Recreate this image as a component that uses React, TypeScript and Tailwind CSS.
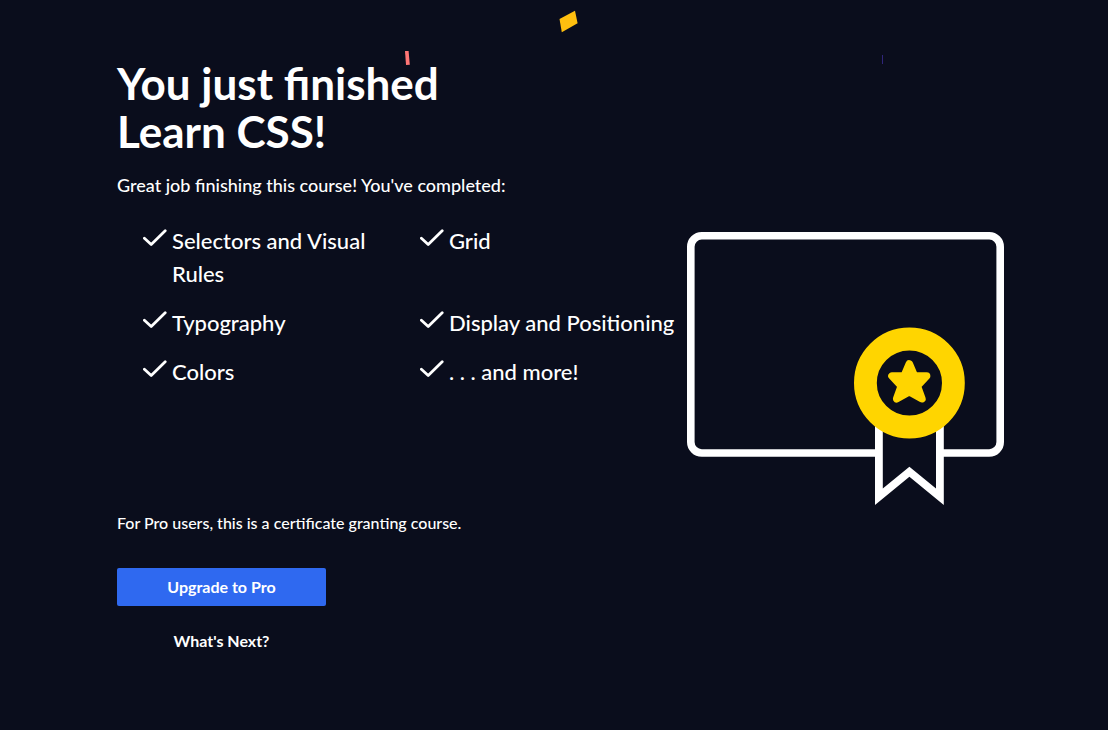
import React from "react";

const topics: string[] = [
  "Selectors and Visual Rules",
  "Grid",
  "Typography",
  "Display and Positioning",
  "Colors",
  ". . . and more!",
];

function CheckIcon() {
  return (
    <svg viewBox="0 0 24 18" className="mt-[5px] h-[18px] w-6 shrink-0" fill="none" aria-hidden="true">
      <path d="M1.4 9.2 8.2 15.5 22.2 1.8" stroke="#fff" strokeWidth="2.8" strokeLinecap="round" strokeLinejoin="round" />
    </svg>
  );
}

function Certificate() {
  return (
    <svg viewBox="0 0 317 273" className="mt-[173px] w-[317px] shrink-0 self-start" fill="none" aria-hidden="true">
      <rect x="3.8" y="3.8" width="309.4" height="217.2" rx="11" stroke="#fff" strokeWidth="7.6" />
      <path d="M192 195H253V240H192Z" fill="#0a0d1c" />
      <path
        d="M188 190V273L222.4 244.7 256.8 273V190H249V256.5L222.4 234.7 195.8 256.5V190Z"
        fill="#fff"
      />
      <circle cx="222.4" cy="151" r="44" fill="#0a0d1c" stroke="#ffd500" strokeWidth="22.8" />
      <path
        d="M222.3 132 227.4 144H239.6L230.3 154 234.9 166.8 222.3 159.8 209.7 166.8 214.3 154 205 144H217.2Z"
        fill="#ffd500"
        stroke="#ffd500"
        strokeWidth="7.6"
        strokeLinejoin="round"
      />
    </svg>
  );
}

function Confetti() {
  return (
    <div className="pointer-events-none" aria-hidden="true">
      <svg viewBox="0 0 20 24" className="absolute left-[559px] top-[10px] h-6 w-5">
        <path d="M.5 9 16 .8 18.6 13.3 2.8 22.2Z" fill="#ffbf0f" />
      </svg>
      <svg viewBox="0 0 6 15" className="absolute left-[405px] top-[51px] h-[15px] w-1.5">
        <path d="M0 0H3.6L4.8 13.8 1 14Z" fill="#ff7575" />
      </svg>
      <svg viewBox="0 0 1 9" className="absolute left-[882px] top-[55px] h-[9px] w-px">
        <path d="M0 0H1V9H0Z" fill="#30257a" />
      </svg>
    </div>
  );
}

export default function App() {
  return (
    <div className="relative min-h-screen bg-[#0a0d1c] font-['Lato',sans-serif] font-medium text-white">
      <main className="flex pb-16 pl-[117px] pr-[104px] pt-[59px]">
        <div className="min-w-0 flex-1">
          <h1 className="text-[44px] font-bold leading-[48px]">
            You just finished
            <br />
            Learn CSS!
          </h1>
          <p className="mt-4 text-lg leading-7">Great job finishing this course! You've completed:</p>
          <ul className="mt-[25px] grid grid-cols-2 gap-x-2.5 gap-y-4 pl-[26px]">
            {topics.map((topic) => (
              <li key={topic} className="flex items-start gap-[5px] text-[22px] leading-[33px]">
                <CheckIcon />
                <span>{topic}</span>
              </li>
            ))}
          </ul>
          <p className="mt-[123px] text-base leading-6">
            For Pro users, this is a certificate granting course.
          </p>
          <div className="mt-[33px] flex w-[209px] flex-col gap-4">
            <button type="button" className="h-[38px] rounded-xs bg-[#2f69f0] text-base font-bold">
              Upgrade to Pro
            </button>
            <button type="button" className="h-[38px] text-base font-bold">
              What's Next?
            </button>
          </div>
        </div>
        <Certificate />
      </main>
      <Confetti />
    </div>
  );
}
